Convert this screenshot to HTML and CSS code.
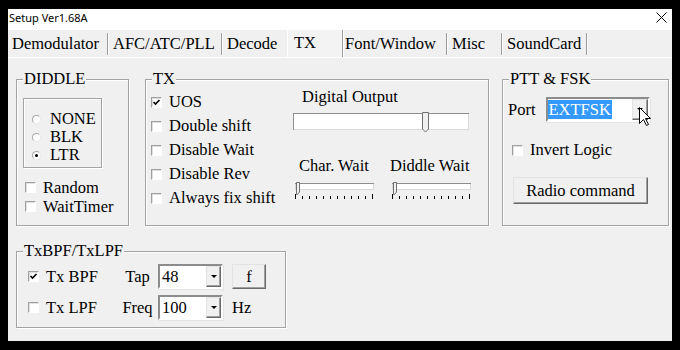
FILE: index.html
```html
<!DOCTYPE html>
<html lang="en">
<head>
    <meta charset="UTF-8">
    <meta name="viewport" content="width=device-width, initial-scale=1.0">
    <title>Setup Ver1.68A</title>
    <link rel="stylesheet" href="styles.css">
</head>
<body>
    <div class="window">
        <div class="titlebar">
            <span class="title">Setup Ver1.68A</span>
            <svg class="close" width="11" height="11" viewBox="0 0 11 11">
                <path d="M0.5 0.5L10.5 10.5M10.5 0.5L0.5 10.5" stroke="#000" stroke-width="1"/>
            </svg>
        </div>

        <div class="tabs">
            <div class="tab tab-demod">Demodulator</div>
            <div class="tab tab-afc">AFC/ATC/PLL</div>
            <div class="tab tab-decode">Decode</div>
            <div class="tab tab-tx active">TX</div>
            <div class="tab tab-font">Font/Window</div>
            <div class="tab tab-misc">Misc</div>
            <div class="tab tab-sound">SoundCard</div>
        </div>

        <div class="panel">
            <div class="top-row">
                <!-- DIDDLE -->
                <div class="group diddle">
                    <div class="group-title">DIDDLE</div>
                    <div class="radio-box">
                        <div class="option"><span class="radio"></span>NONE</div>
                        <div class="option"><span class="radio"></span>BLK</div>
                        <div class="option"><span class="radio on"></span>LTR</div>
                    </div>
                    <div class="diddle-checks">
                        <div class="option tall"><span class="box"></span>Random</div>
                        <div class="option tall"><span class="box"></span>WaitTimer</div>
                    </div>
                </div>

                <!-- TX -->
                <div class="group tx">
                    <div class="group-title">TX</div>
                    <div class="tx-body">
                        <div class="tx-checks">
                            <div class="option row24"><span class="box"><svg width="9" height="9" viewBox="0 0 9 9"><path d="M1.5 4L3.5 6L7.5 2" fill="none" stroke="#000" stroke-width="1.6"/></svg></span>UOS</div>
                            <div class="option row24"><span class="box"></span>Double shift</div>
                            <div class="option row24"><span class="box"></span>Disable Wait</div>
                            <div class="option row24"><span class="box"></span>Disable Rev</div>
                            <div class="option row24"><span class="box"></span>Always fix shift</div>
                        </div>
                        <div class="tx-sliders">
                            <div class="output-label">Digital Output</div>
                            <svg class="slider-wide" width="176" height="22" viewBox="0 0 176 22">
                                <rect x="0.5" y="2.5" width="175" height="16" fill="#fff" stroke="#d9d9d9"/>
                                <path d="M0 2.5H176M0.5 2V19" stroke="#8f8f8f"/>
                                <path d="M129.5 1.5H135.5V18L132.5 21L129.5 18Z" fill="#f0f0f0" stroke="#707070"/>
                            </svg>
                            <div class="wait-row">
                                <div class="wait">
                                    <div class="wait-label char">Char. Wait</div>
                                    <svg class="slider-small" width="79" height="19" viewBox="0 0 79 19">
                                        <rect x="0.5" y="1.5" width="78" height="6" fill="#fff" stroke="#d9d9d9"/>
                                        <path d="M0 1.5H79" stroke="#8f8f8f"/>
                                        <path d="M1.5 0.5H4.5V10L2.5 12.5H1.5Z" fill="#f0f0f0" stroke="#707070"/>
                                        <path d="M0.5 12V17M7.5 14V17M14.5 14V17M21.5 14V17M28.5 14V17M35.5 14V17M42.5 14V17M49.5 14V17M56.5 14V17M63.5 14V17M70.5 14V17M77.5 12V17" stroke="#000"/>
                                    </svg>
                                </div>
                                <div class="wait diddle-wait">
                                    <div class="wait-label">Diddle Wait</div>
                                    <svg class="slider-small" width="79" height="19" viewBox="0 0 79 19">
                                        <rect x="0.5" y="1.5" width="78" height="6" fill="#fff" stroke="#d9d9d9"/>
                                        <path d="M0 1.5H79" stroke="#8f8f8f"/>
                                        <path d="M1.5 0.5H4.5V10L2.5 12.5H1.5Z" fill="#f0f0f0" stroke="#707070"/>
                                        <path d="M0.5 12V17M7.5 14V17M14.5 14V17M21.5 14V17M28.5 14V17M35.5 14V17M42.5 14V17M49.5 14V17M56.5 14V17M63.5 14V17M70.5 14V17M77.5 12V17" stroke="#000"/>
                                    </svg>
                                </div>
                            </div>
                        </div>
                    </div>
                </div>

                <!-- PTT & FSK -->
                <div class="group ptt">
                    <div class="group-title">PTT &amp; FSK</div>
                    <div class="port-row">
                        <span>Port</span>
                        <div class="combo port">
                            <span class="combo-value selected">EXTFSK</span>
                            <span class="drop"><span class="arrow"></span></span>
                            <svg class="pointer" width="13" height="20" viewBox="0 0 13 20">
                                <path d="M0.5 0.5V16.5L4.5 12.5L7.5 18.5L9.5 17.5L6.5 11.5H11.5Z" fill="#fff" stroke="#000" stroke-linejoin="round"/>
                            </svg>
                        </div>
                    </div>
                    <div class="option invert"><span class="box"></span>Invert Logic</div>
                    <button class="btn radio-cmd">Radio command</button>
                </div>
            </div>

            <!-- TxBPF/TxLPF -->
            <div class="group filter">
                <div class="group-title">TxBPF/TxLPF</div>
                <div class="filter-body">
                    <div class="filter-row">
                        <div class="option filter-check"><span class="box"><svg width="9" height="9" viewBox="0 0 9 9"><path d="M1.5 4L3.5 6L7.5 2" fill="none" stroke="#000" stroke-width="1.6"/></svg></span>Tx BPF</div>
                        <span class="filter-label">Tap</span>
                        <div class="combo small">
                            <span class="combo-value">48</span>
                            <span class="drop"><span class="arrow"></span></span>
                        </div>
                        <button class="btn f-btn">f</button>
                    </div>
                    <div class="filter-row">
                        <div class="option filter-check"><span class="box"></span>Tx LPF</div>
                        <span class="filter-label">Freq</span>
                        <div class="combo small">
                            <span class="combo-value">100</span>
                            <span class="drop"><span class="arrow"></span></span>
                        </div>
                        <span class="hz">Hz</span>
                    </div>
                </div>
            </div>
        </div>
    </div>
</body>
</html>
```

FILE: styles.css
```css
* {
    box-sizing: border-box;
    margin: 0;
    padding: 0;
}

body {
    background: #000;
    padding: 9px 0 0 8px;
    font-family: "Liberation Serif", "Times New Roman", serif;
    font-size: 16.5px;
    color: #000;
}

.window {
    width: 664px;
    height: 332px;
    background: #f0f0f0;
}

/* title bar */
.titlebar {
    height: 21px;
    background: #fff;
    display: flex;
    justify-content: space-between;
    align-items: flex-start;
    padding: 1px 5px 0 1px;
}

.title {
    font-family: "Noto Sans", sans-serif;
    font-size: 11px;
    line-height: 15px;
}

.close {
    display: block;
    margin-top: 2px;
}

/* tabs */
.tabs {
    display: flex;
    height: 28px;
    padding-left: 2px;
    border-bottom: 1px solid #fff;
}

.tab {
    margin: 3px 0 2px;
    height: 22px;
    line-height: 22px;
    padding-left: 5px;
    white-space: nowrap;
    border-right: 1px solid #9c9c9c;
    box-shadow: 1px 0 #fff;
}

.tab-demod { width: 98px; padding-left: 2px; }
.tab-afc { width: 114px; }
.tab-decode { width: 65px; border-right: none; box-shadow: none; }
.tab-font { width: 104px; padding-left: 2px; }
.tab-misc { width: 55px; }
.tab-sound { width: 85px; }

.tab.active {
    width: 56px;
    margin: 0;
    height: 27px;
    line-height: 25px;
    padding-left: 6px;
    background: #f3f3f3;
    border-left: 1px solid #fff;
}

/* content panel */
.panel {
    padding: 21px 0 0 8px;
}

.top-row {
    display: flex;
    height: 147px;
}

.group {
    border: 1px solid #a3a3a3;
    box-shadow: inset 1px 1px #fff, 1px 1px #fff;
}

.group-title {
    width: fit-content;
    margin: -9px 0 0 6px;
    padding: 0 1px;
    line-height: 16px;
    background: #f0f0f0;
}

.option {
    display: flex;
    align-items: center;
    height: 18px;
    white-space: nowrap;
}

.option.tall {
    height: 19px;
}

.option.row24 {
    height: 24px;
}

.box {
    display: flex;
    align-items: center;
    justify-content: center;
    width: 11px;
    height: 11px;
    margin-right: 7px;
    flex-shrink: 0;
    background: #fff;
    border: 1px solid;
    border-color: #a0a0a0 #fff #fff #a0a0a0;
    box-shadow: inset 1px 1px #e0e0e0;
}

.radio {
    position: relative;
    width: 9px;
    height: 9px;
    margin-right: 9px;
    border-radius: 50%;
    background: #fff;
    border: 1px solid;
    border-color: #a8a8a8 #e8e8e8 #e8e8e8 #a8a8a8;
}

.radio.on::after {
    content: "";
    position: absolute;
    left: 2px;
    top: 2px;
    width: 3px;
    height: 3px;
    border-radius: 50%;
    background: #000;
}

/* DIDDLE */
.diddle {
    width: 113px;
}

.radio-box {
    width: 79px;
    height: 70px;
    margin: 11px 0 0 6px;
    padding: 11px 0 0 8px;
    border: 1px solid #a3a3a3;
    box-shadow: inset 1px 1px #fff, 1px 1px #fff;
}

.diddle-checks {
    margin: 10px 0 0 8px;
}

/* TX */
.tx {
    width: 344px;
    margin-left: 16px;
}

.tx-body {
    display: flex;
    padding-left: 5px;
}

.tx-checks {
    width: 142px;
    margin-top: 3px;
}

.output-label {
    margin-top: 1px;
    padding-left: 9px;
    line-height: 18px;
}

.slider-wide,
.slider-small {
    display: block;
}

.slider-wide {
    margin-top: 5px;
}

.wait-row {
    display: flex;
    margin: 24px 0 0 2px;
}

.wait {
    width: 79px;
}

.wait-label {
    line-height: 18px;
    white-space: nowrap;
}

.wait-label.char {
    padding-left: 4px;
}

.wait .slider-small {
    margin-top: 7px;
}

.diddle-wait {
    width: 81px;
    margin-left: 16px;
}

.diddle-wait .slider-small {
    margin-left: 2px;
}

/* PTT & FSK */
.ptt {
    width: 167px;
    margin-left: 13px;
}

.port-row {
    display: flex;
    align-items: center;
    margin: 10px 0 0 5px;
}

.combo {
    position: relative;
    display: flex;
    align-items: center;
    height: 25px;
    background: #fff;
    border: 2px solid;
    border-color: #8c8c8c #fff #fff #8c8c8c;
    box-shadow: 1px 1px #e3e3e3;
}

.combo.port {
    width: 104px;
    margin-left: 10px;
}

.combo-value {
    flex: 1;
    padding-left: 2px;
    line-height: 20px;
}

.combo-value.selected {
    flex: 0 0 auto;
    margin-right: auto;
    padding: 0 1px;
    height: 19px;
    line-height: 19px;
    background: #3399ff;
    color: #fff;
}

.drop {
    display: flex;
    align-items: center;
    justify-content: center;
    align-self: stretch;
    width: 16px;
    background: #f0f0f0;
    border: 1px solid;
    border-color: #e3e3e3 #696969 #696969 #e3e3e3;
    box-shadow: inset -1px -1px #a0a0a0;
}

.combo.small .drop {
    width: 15px;
}

.arrow {
    width: 0;
    height: 0;
    border-left: 3px solid transparent;
    border-right: 3px solid transparent;
    border-top: 3px solid #000;
}

.pointer {
    position: absolute;
    left: 91px;
    top: 8px;
}

.invert {
    margin: 19px 0 0 9px;
}

.btn {
    appearance: none;
    font: inherit;
    font-family: "Liberation Serif", "Times New Roman", serif;
    color: #000;
    background: #f0f0f0;
    border: 1px solid;
    border-color: #e3e3e3 #696969 #696969 #e3e3e3;
    box-shadow: inset -1px -1px #a0a0a0;
}

.radio-cmd {
    display: block;
    width: 135px;
    height: 27px;
    margin: 18px 0 0 10px;
}

/* TxBPF/TxLPF */
.filter {
    width: 270px;
    height: 77px;
    margin-top: 25px;
}

.filter-body {
    padding: 5px 0 0 11px;
}

.filter-row {
    display: flex;
    align-items: center;
    height: 25px;
}

.filter-row + .filter-row {
    margin-top: 6px;
}

.filter-check {
    width: 92px;
}

.filter-label {
    width: 35px;
    text-align: center;
}

.combo.small {
    width: 65px;
    margin-left: 3px;
}

.f-btn {
    width: 34px;
    height: 25px;
    margin-left: 9px;
}

.hz {
    margin-left: 9px;
}
```
